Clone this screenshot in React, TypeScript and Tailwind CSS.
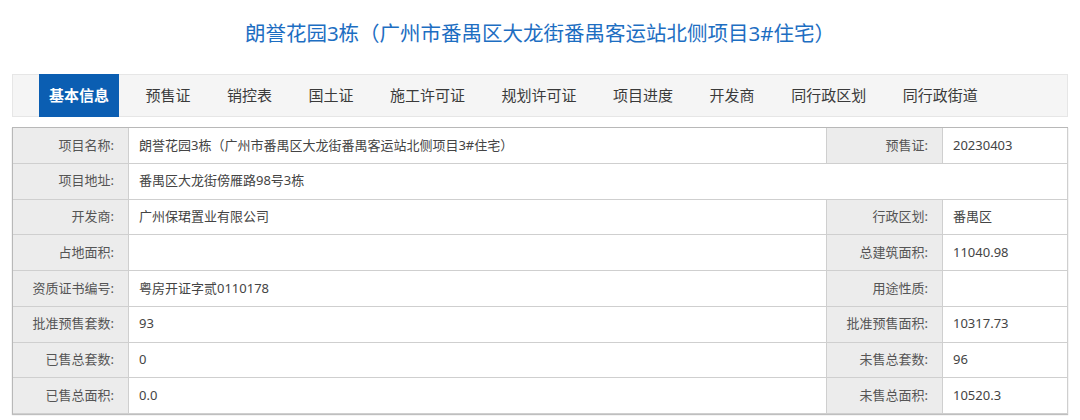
const font = "font-['Noto_Sans','Noto_Sans_CJK_SC',sans-serif]"

const tabs = ['基本信息', '预售证', '销控表', '国土证', '施工许可证', '规划许可证', '项目进度', '开发商', '同行政区划', '同行政街道']

type Row = { label: string; value: string; label2?: string; value2?: string }

const rows: Row[] = [
  { label: '项目名称:', value: '朗誉花园3栋（广州市番禺区大龙街番禺客运站北侧项目3#住宅）', label2: '预售证:', value2: '20230403' },
  { label: '项目地址:', value: '番禺区大龙街傍雁路98号3栋' },
  { label: '开发商:', value: '广州保珺置业有限公司', label2: '行政区划:', value2: '番禺区' },
  { label: '占地面积:', value: '', label2: '总建筑面积:', value2: '11040.98' },
  { label: '资质证书编号:', value: '粤房开证字贰0110178', label2: '用途性质:', value2: '' },
  { label: '批准预售套数:', value: '93', label2: '批准预售面积:', value2: '10317.73' },
  { label: '已售总套数:', value: '0', label2: '未售总套数:', value2: '96' },
  { label: '已售总面积:', value: '0.0', label2: '未售总面积:', value2: '10520.3' },
]

function Label({ text }: { text: string }) {
  return (
    <div className="flex h-[35.75px] items-center justify-end border-r border-b border-[#cfcfcf] bg-[#ececec] pr-[14px] text-[13px] text-[#555]">
      {text}
    </div>
  )
}

function Value({ text, wide }: { text: string; wide?: boolean }) {
  return (
    <div
      className={`flex h-[35.75px] items-center border-r border-b border-[#cfcfcf] bg-white pl-[10px] text-[13px] text-[#444] ${
        wide ? 'col-span-3' : ''
      }`}
    >
      {text}
    </div>
  )
}

export default function App() {
  return (
    <div className={`min-h-screen bg-white ${font}`}>
      <h1 className="pt-[19px] text-center text-[20.5px] leading-[28px] font-normal text-[#1d6ec2]">
        朗誉花园3栋（广州市番禺区大龙街番禺客运站北侧项目3#住宅）
      </h1>

      <nav className="mx-[12px] mt-[27px] flex h-[43px] items-stretch gap-[16.5px] border border-[#e6e6e6] bg-[#f5f5f5] pl-[26px]">
        {tabs.map((t, i) => (
          <div
            key={t}
            className={
              i === 0
                ? '-my-px flex items-center bg-[#0b5eb2] px-[10px] text-[15px] font-bold text-white'
                : 'flex items-center px-[10px] text-[15px] text-[#3a3a3a]'
            }
          >
            {t}
          </div>
        ))}
      </nav>

      <div className="mx-[12px] mt-[10px] grid grid-cols-[116px_698px_116px_1fr] border-t border-l border-[#b8b8b8] shadow-[0_1px_1px_rgba(0,0,0,0.25)]">
        {rows.map(r =>
          r.label2 === undefined ? (
            <div key={r.label} className="contents">
              <Label text={r.label} />
              <Value text={r.value} wide />
            </div>
          ) : (
            <div key={r.label} className="contents">
              <Label text={r.label} />
              <Value text={r.value} />
              <Label text={r.label2} />
              <Value text={r.value2 ?? ''} />
            </div>
          )
        )}
      </div>
    </div>
  )
}
